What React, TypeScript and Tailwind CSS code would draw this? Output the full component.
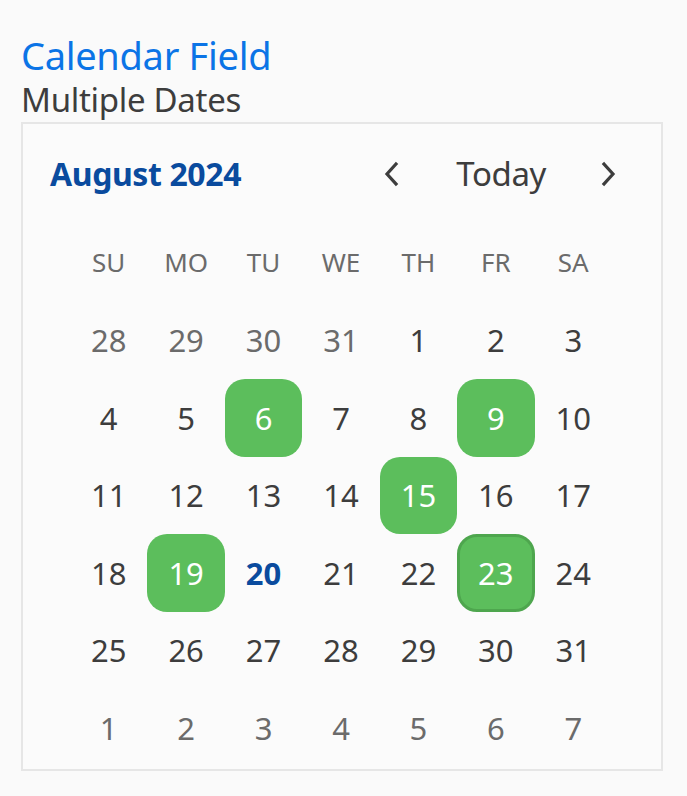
import React from "react";

const selected = new Set([6, 9, 15, 19, 23]);

type Cell = { d: number; out: boolean };

const cells: Cell[] = [
  ...[28, 29, 30, 31].map((d) => ({ d, out: true })),
  ...Array.from({ length: 31 }, (_, i) => ({ d: i + 1, out: false })),
  ...[1, 2, 3, 4, 5, 6, 7].map((d) => ({ d, out: true })),
];

const days = ["SU", "MO", "TU", "WE", "TH", "FR", "SA"];

function Chevron({ dir }: { dir: "l" | "r" }) {
  return (
    <svg width="18" height="26" viewBox="0 0 18 26" fill="none">
      <path
        d={dir === "l" ? "M13 3 L4 13 L13 23" : "M5 3 L14 13 L5 23"}
        stroke="#3d3d3d"
        strokeWidth="3.2"
        strokeLinecap="square"
        strokeLinejoin="miter"
      />
    </svg>
  );
}

export default function App() {
  return (
    <div
      className="min-h-[796px] w-[687px] bg-[#fafafa] pl-[21px] pt-[33px]"
      style={{ fontFamily: '"Noto Sans", "Open Sans", sans-serif' }}
    >
      <div className="text-[38px] leading-[44px] text-[#0b74e6] tracking-[-0.3px]">Calendar Field</div>
      <div className="mt-[3px] text-[33px] leading-[40px] text-[#3d3d3d] tracking-[-0.3px]">Multiple Dates</div>
      <div className="mt-[2px] w-[642px] border-2 border-[#e6e6e6] bg-[#fbfbfb] pb-[2px]">
        <div className="flex h-[100px] items-center justify-between pl-[27px] pr-[31px]">
          <div className="text-[32px] font-bold text-[#0a4b9e] tracking-[-0.4px]">August 2024</div>
          <div className="flex items-center">
            <button className="flex h-[44px] w-[44px] items-center justify-center">
              <Chevron dir="l" />
            </button>
            <span className="ml-[42px] mr-[40px] text-[33px] text-[#3d3d3d] tracking-[-0.4px]">Today</span>
            <button className="flex h-[44px] w-[44px] items-center justify-center">
              <Chevron dir="r" />
            </button>
          </div>
        </div>
        <div className="ml-[47px] grid w-[542px] grid-cols-7">
          {days.map((d) => (
            <div key={d} className="flex h-[77.5px] items-center justify-center text-[26px] text-[#6b6b6b]">
              {d}
            </div>
          ))}
          {cells.map((c, i) => {
            const sel = !c.out && selected.has(c.d);
            const today = !c.out && c.d === 20;
            const focus = !c.out && c.d === 23;
            let cls = "flex h-[77.5px] items-center justify-center text-[31px] ";
            if (sel) {
              cls += "rounded-[20px] bg-[#5cbe5c] text-white ";
              if (focus) cls += "border-[3px] border-[#4ea64e] ";
            } else if (today) {
              cls += "font-bold text-[#0a4b9e] ";
            } else if (c.out) {
              cls += "text-[#6b6b6b] ";
            } else {
              cls += "text-[#3d3d3d] ";
            }
            return (
              <div key={i} className={cls}>
                {c.d}
              </div>
            );
          })}
        </div>
      </div>
    </div>
  );
}
